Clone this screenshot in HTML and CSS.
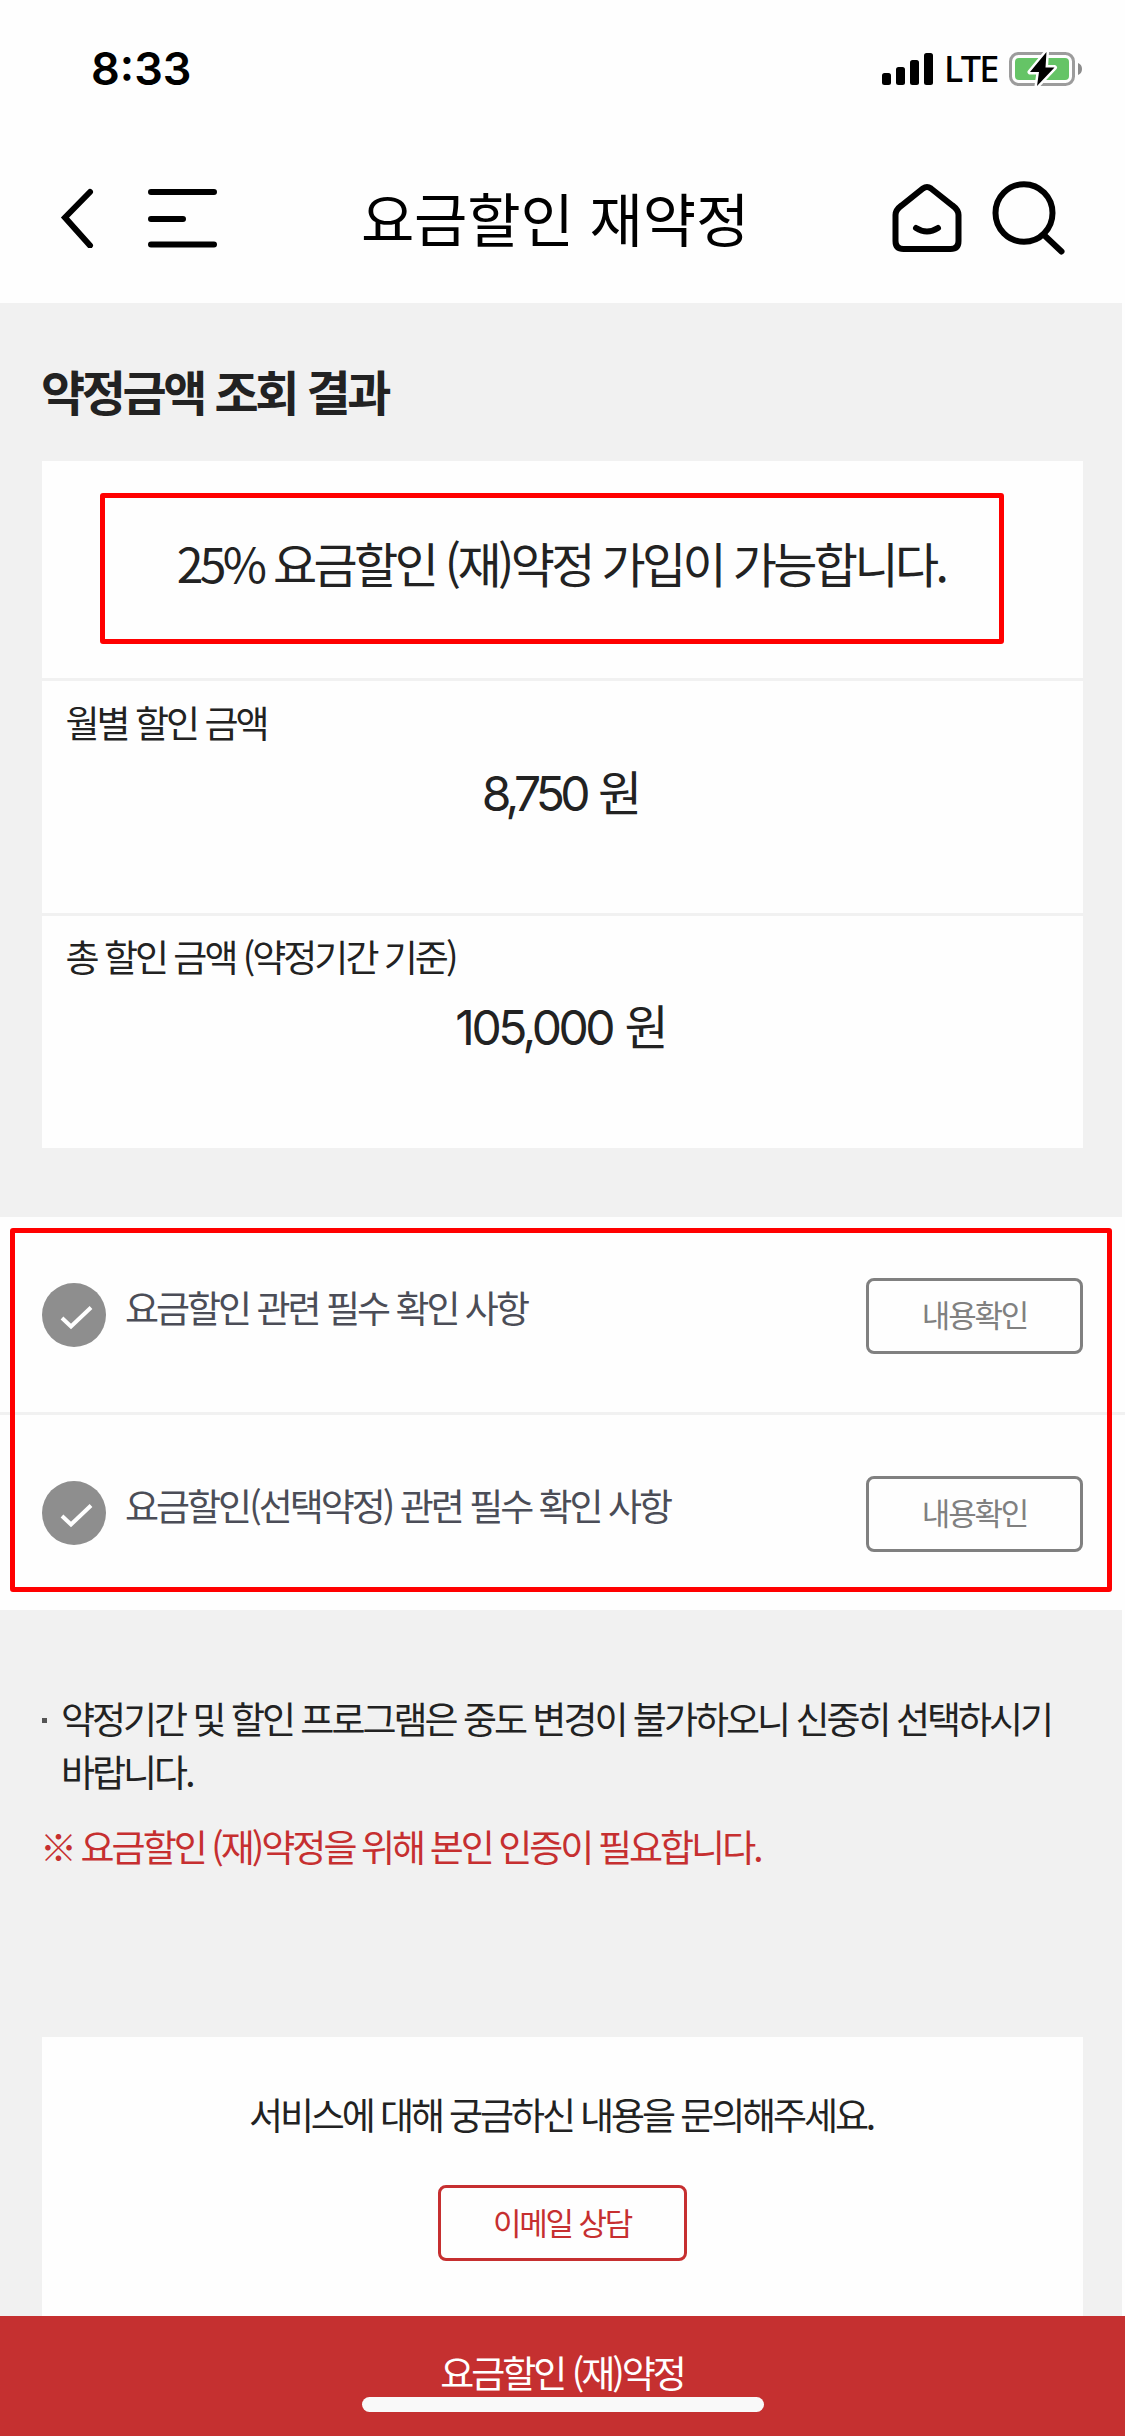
FILE: index.html
```html
<!DOCTYPE html>
<html lang="ko">
<head>
<meta charset="utf-8">
<title>요금할인 재약정</title>
<link rel="stylesheet" href="styles.css">
</head>
<body>
<div class="status-bar">
  <span class="time">8:33</span>
  <div class="status-right">
    <svg class="signal" width="52" height="34" viewBox="0 0 52 34"><rect x="0" y="21" width="9" height="12" rx="2.5"/><rect x="14" y="15" width="9" height="18" rx="2.5"/><rect x="28" y="8" width="9" height="25" rx="2.5"/><rect x="42" y="1" width="9" height="32" rx="2.5"/></svg>
    <span class="network">LTE</span>
    <svg class="battery" width="74" height="38" viewBox="0 0 74 38"><rect x="1.5" y="3.5" width="63" height="31" rx="8" fill="none" stroke="#9c9c9c" stroke-width="3"/><rect x="6" y="8" width="54" height="22" rx="4" fill="#65c466"/><path d="M69 13a6.5 6.5 0 0 1 0 12z" fill="#8c8c8c"/><path d="M37.5 2 21 22h9l-2 14L45.500 17.500H36.500z" fill="#000" stroke="#fff" stroke-width="5" stroke-linejoin="round" paint-order="stroke"/></svg>
  </div>
</div>
<header class="nav">
  <svg class="back" width="36" height="60" viewBox="0 0 36 60"><path d="M31 4.500 6 30l25 28" transform="translate(0 -.5)" fill="none" stroke="#000" stroke-width="6" stroke-linecap="round"/></svg>
  <svg class="menu" width="70" height="60" viewBox="0 0 70 60"><path d="M3 4h63M3 31h32M3 56.500h63" fill="none" stroke="#000" stroke-width="6" stroke-linecap="round"/></svg>
  <h1 class="nav-title">요금할인 재약정</h1>
  <svg class="home" width="70" height="72" viewBox="0 0 70 72"><path d="M39 6.500 60.500 23.500Q66.500 28 66.500 33V59q0 8-8 8h-47q-8 0-8-8V33q0-5 6-9.500L31 6.500q4-3 8 0zM24 46q11 7 22 0" fill="none" stroke="#000" stroke-width="6" stroke-linecap="round"/></svg>
  <svg class="search" width="74" height="74" viewBox="0 0 74 74"><ellipse cx="32" cy="32" rx="28.500" ry="28.800" fill="none" stroke="#000" stroke-width="6"/><path d="M52 54 69.500 70.500" stroke="#000" stroke-width="6" stroke-linecap="round"/></svg>
</header>
<main class="page">
  <h2 class="section-title">약정금액 조회 결과</h2>
  <section class="result">
    <p class="headline">25% 요금할인 (재)약정 가입이 가능합니다.</p>
    <div class="amount-row">
      <p class="amount-label">월별 할인 금액</p>
      <p class="amount"><span class="num num-monthly">8,750</span> 원</p>
    </div>
    <div class="amount-row">
      <p class="amount-label">총 할인 금액 (약정기간 기준)</p>
      <p class="amount"><span class="num">105,000</span> 원</p>
    </div>
    <div class="mark mark-headline"></div>
  </section>
  <section class="checks">
    <div class="check-row">
      <svg class="check" width="64" height="64" viewBox="0 0 64 64"><circle cx="32" cy="32" r="32"/><path d="M20 35l9 8.500L49 24.500"/></svg>
      <span class="check-text">요금할인 관련 필수 확인 사항</span>
      <button class="btn btn-gray">내용확인</button>
    </div>
    <div class="check-row">
      <svg class="check" width="64" height="64" viewBox="0 0 64 64"><circle cx="32" cy="32" r="32"/><path d="M20 35l9 8.500L49 24.500"/></svg>
      <span class="check-text">요금할인(선택약정) 관련 필수 확인 사항</span>
      <button class="btn btn-gray">내용확인</button>
    </div>
    <div class="mark mark-checks"></div>
  </section>
  <section class="notes">
    <p class="note">약정기간 및 할인 프로그램은 중도 변경이 불가하오니 신중히 선택하시기<br>바랍니다.</p>
    <p class="warning">※ 요금할인 (재)약정을 위해 본인 인증이 필요합니다.</p>
  </section>
  <section class="contact">
    <p class="contact-text">서비스에 대해 궁금하신 내용을 문의해주세요.</p>
    <button class="btn btn-red">이메일 상담</button>
  </section>
</main>
<footer class="bottom-bar">
  <span class="bottom-text">요금할인 (재)약정</span>
  <div class="home-indicator"></div>
</footer>
</body>
</html>
```
FILE: styles.css
```css
* { box-sizing: border-box; margin: 0; padding: 0; }
body {
  width: 1125px; height: 2436px; overflow: hidden;
  display: flex; flex-direction: column;
  background: #fefefe; color: #222;
  font-family: "Noto Sans CJK KR", sans-serif;
  font-size: 37px; letter-spacing: -3px; word-spacing: 0;
}
p, h1, h2, span { white-space: nowrap; }

.status-bar { height: 138px; display: flex; justify-content: space-between; align-items: center; padding: 0 42px 0 91px; color: #000; }
.time { font: 600 45px/60px Inter, sans-serif; letter-spacing: 0; }
.status-right { display: flex; align-items: center; }
.signal { margin-right: 9px; }
.network { width: 66px; font: 500 36px/60px "Noto Sans", sans-serif; letter-spacing: -1.8px; padding-left: 1px; }

.nav { height: 165px; display: flex; align-items: flex-start; color: #000; }
.nav svg { flex: none; }
.back { margin: 50px 0 0 59px; }
.menu { margin: 50px 0 0 53px; }
.nav-title { flex: 1; text-align: center; font-size: 58px; font-weight: 400; line-height: 80px; letter-spacing: -.2px; word-spacing: 0; padding-top: 39px; }
.home { margin-top: 44px; }
.search { margin: 43px 59px 0 30px; }

.page { height: 2013px; width: 1122px; background: #f1f1f1; }
.section-title { padding: 55px 0 0 41px; height: 158px; font-size: 48px; line-height: 64px; font-weight: 700; letter-spacing: -3.4px; word-spacing: .4px; }
.result { position: relative; width: 1041px; height: 687px; margin-left: 41.5px; background: #fefefe; }
.headline { height: 217px; padding: 69px 2px 0 0; line-height: 64px; font-size: 48px; text-align: center; letter-spacing: -3.6px; word-spacing: -.2px; }
.amount-row { height: 235px; border-top: 3px solid #f1f1f1; }
.amount-label { padding: 16px 0 0 24px; line-height: 50px; }
.amount-row + .amount-row .amount-label { padding-top: 15px; }
.amount { margin-top: 11px; font-size: 48px; line-height: 64px; text-align: center; letter-spacing: 0; word-spacing: -1px; }
.num { font-family: Inter, sans-serif; letter-spacing: -3.5px; }
.num-monthly { letter-spacing: -4.8px; }
.mark { position: absolute; border: 5px solid #f00; border-radius: 3px; }
.mark-headline { left: 58.5px; top: 32px; width: 904px; height: 151px; }

.checks { position: relative; width: 1125px; height: 393px; margin-top: 69px; background: #fefefe; }
.check-row { height: 198px; display: flex; align-items: flex-start; padding: 61px 42px 0; border-bottom: 3px solid #f1f1f1; }
.check-row + .check-row { height: 195px; border: 0; }
.check { margin-top: 5px; fill: #8e8e8e; }
.check path { fill: none; stroke: #fff; stroke-width: 4; }
.check-text { flex: 1; margin: 2px 0 0 19px; line-height: 54px; color: #4b4d57; }
.mark-checks { left: 10px; top: 11px; width: 1102px; height: 364px; }
.btn { height: 76px; border-radius: 8px; background: transparent; font: 400 31px/66px "Noto Sans CJK KR", sans-serif; letter-spacing: -2.200px; }
.btn-gray { width: 217px; padding-bottom: 8px; border: 3px solid #808080; color: #808080; }
.btn-red { display: block; width: 249px; margin: 44px auto 0; padding-bottom: 2px; border: 3px solid #c62f30; color: #c62f30; }

.notes { height: 427px; padding: 82px 0 0 41px; }
.note { position: relative; padding-left: 20px; line-height: 53px; }
.note::before { content: ""; position: absolute; left: 1px; top: 26px; width: 5px; height: 5px; background: #555; }
.warning { margin-top: 22px; line-height: 53px; margin-left: -1px; word-spacing: -.8px; color: #c62f30; }
.contact { width: 1041px; height: 279px; margin-left: 41.5px; padding-top: 51px; background: #fefefe; text-align: center; }
.contact-text { line-height: 53px; letter-spacing: -3.1px; padding-right: 2px; }

.bottom-bar { height: 120px; display: flex; flex-direction: column; align-items: center; background: #c53030; color: #fff; }
.bottom-text { margin-top: 32px; line-height: 49px; padding-right: 1px; }
.home-indicator { width: 402px; height: 15px; border-radius: 8px; background: #f9f9f9; }
```
